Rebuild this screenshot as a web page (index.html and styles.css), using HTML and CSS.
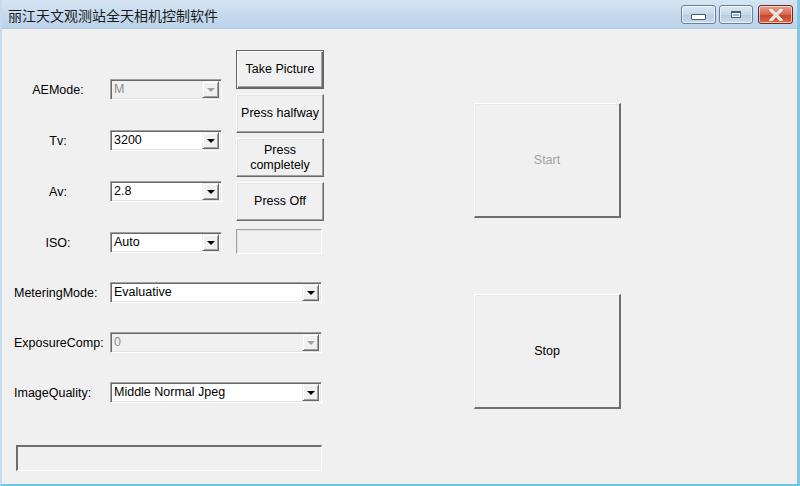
FILE: index.html
```html
<!DOCTYPE html>
<html lang="zh">
<head>
<meta charset="utf-8">
<title>丽江天文观测站全天相机控制软件</title>
<link rel="stylesheet" href="styles.css">
</head>
<body>
<div class="window">
  <div class="titlebar">
    <span class="title">丽江天文观测站全天相机控制软件</span>
    <div class="caption-btns">
      <span class="cap cap-min"><span class="min-glyph"></span></span>
      <span class="cap cap-max"><span class="max-glyph"></span></span>
      <span class="cap cap-close">
        <svg width="14" height="12" viewBox="0 0 14 12"><path d="M2 1 L12 11 M12 1 L2 11" stroke="#fff" stroke-width="3" stroke-linecap="square" fill="none"/><path d="M2 1 L12 11 M12 1 L2 11" stroke="#7a2a1a" stroke-width="0.6" fill="none" opacity="0.35"/></svg>
      </span>
    </div>
  </div>
  <div class="client">
    <div class="left">
      <div class="top">
        <div class="fields">
          <div class="row"><span class="lbl">AEMode:</span><div class="combo narrow disabled"><span class="val">M</span><span class="drop"><span class="tri"></span></span></div></div>
          <div class="row"><span class="lbl">Tv:</span><div class="combo narrow"><span class="val">3200</span><span class="drop"><span class="tri"></span></span></div></div>
          <div class="row"><span class="lbl">Av:</span><div class="combo narrow"><span class="val">2.8</span><span class="drop"><span class="tri"></span></span></div></div>
          <div class="row"><span class="lbl">ISO:</span><div class="combo narrow"><span class="val">Auto</span><span class="drop"><span class="tri"></span></span></div></div>
        </div>
        <div class="btncol">
          <div class="btn default">Take Picture</div>
          <div class="btn">Press halfway</div>
          <div class="btn">Press<br>completely</div>
          <div class="btn">Press Off</div>
          <div class="emptybox"></div>
        </div>
      </div>
      <div class="wide">
        <div class="wrow"><span class="wlbl">MeteringMode:</span><div class="combo wide-c"><span class="val">Evaluative</span><span class="drop"><span class="tri"></span></span></div></div>
        <div class="wrow"><span class="wlbl">ExposureComp:</span><div class="combo wide-c disabled"><span class="val">0</span><span class="drop"><span class="tri"></span></span></div></div>
        <div class="wrow"><span class="wlbl">ImageQuality:</span><div class="combo wide-c"><span class="val">Middle Normal Jpeg</span><span class="drop"><span class="tri"></span></span></div></div>
      </div>
      <div class="status"></div>
    </div>
    <div class="right">
      <div class="bigbtn disabled-text">Start</div>
      <div class="bigbtn">Stop</div>
    </div>
  </div>
</div>
</body>
</html>
```
FILE: styles.css
```css
html, body {
  margin: 0;
  padding: 0;
  background: #f0f0f0;
}
body {
  font-family: "Liberation Sans", Arial, sans-serif;
  font-size: 12.5px;
  color: #000;
}
.window {
  width: 800px;
  height: 486px;
  box-sizing: border-box;
  background: #f0f0f0;
  border-left: 2px solid #c8dbee;
  border-right: 3px solid #7cc8ea;
  border-bottom: 2px solid #6cc6e6;
  overflow: hidden;
}
.titlebar {
  height: 29px;
  box-sizing: border-box;
  background: linear-gradient(#d6e5f4, #c4d8ed 60%, #bcd3ea);
  border-bottom: 1px solid #b4cae2;
  display: flex;
  align-items: center;
  justify-content: space-between;
  padding-left: 6px;
  padding-right: 4px;
}
.title {
  font-family: "Noto Sans CJK SC", sans-serif;
  font-size: 14px;
  color: #1a1a1a;
  margin-top: 2px;
}
.caption-btns {
  display: flex;
  gap: 3px;
  align-self: flex-start;
  margin-top: 5px;
}
.cap {
  height: 19px;
  box-sizing: border-box;
  border: 1px solid #6a7f99;
  border-radius: 3px;
  display: flex;
  align-items: center;
  justify-content: center;
  box-shadow: inset 0 0 0 1px rgba(255,255,255,0.6);
}
.cap-min, .cap-max {
  width: 35px;
  background: linear-gradient(#dde9f5, #c5d7ea 50%, #b6cce3 51%, #c8daee);
}
.cap-min { margin-left: 2px; }
.cap-max { width: 34px; margin-right: 2px; }
.cap-close {
  width: 35px;
  border-color: #6b2a1f;
  background: linear-gradient(#e9a08e, #d4674d 50%, #c24429 51%, #d66a4c);
}
.min-glyph {
  width: 13px;
  height: 4px;
  margin-top: 5px;
  background: #fff;
  border: 1px solid #4a5a70;
  border-radius: 1px;
}
.max-glyph {
  width: 10px;
  height: 7px;
  box-sizing: border-box;
  border: 1px solid #4a5a70;
  border-top-width: 2px;
  background: #fff;
  box-shadow: inset 0 0 0 1px #fff, inset 0 0 0 3px #9fb3c9;
}
.client {
  display: flex;
  height: 455px;
}
.left {
  width: 322px;
  display: flex;
  flex-direction: column;
}
.top {
  display: flex;
  padding-top: 21px;
}
.fields {
  display: flex;
  flex-direction: column;
  gap: 30px;
  padding-top: 29px;
  width: 234px;
  flex: none;
}
.row {
  display: flex;
  align-items: center;
  height: 21px;
}
.lbl {
  width: 80px;
  margin-left: 16px;
  text-align: center;
  margin-right: 12px;
}
.combo {
  height: 21px;
  box-sizing: border-box;
  background: #fff;
  border-top: 1px solid #a0a0a0;
  border-left: 1px solid #a0a0a0;
  border-right: 1px solid #fff;
  border-bottom: 1px solid #fff;
  box-shadow: inset 1px 1px 0 #696969, inset -1px -1px 0 #e3e3e3;
  display: flex;
  align-items: center;
  justify-content: space-between;
  padding: 2px 2px 2px 3px;
  flex: none;
}
.combo.narrow { width: 112px; }
.combo.wide-c { width: 212px; }
.combo .val {
  line-height: 15px;
}
.combo.disabled { background: #f0f0f0; }
.combo.disabled .val { color: #8c8c8c; }
.drop {
  width: 17px;
  height: 17px;
  box-sizing: border-box;
  background: #f0f0f0;
  border-top: 1px solid #f0f0f0;
  border-left: 1px solid #f0f0f0;
  border-right: 1px solid #696969;
  border-bottom: 1px solid #696969;
  box-shadow: inset 1px 1px 0 #fff, inset -1px -1px 0 #a0a0a0;
  display: flex;
  align-items: center;
  justify-content: center;
}
.tri {
  width: 0;
  height: 0;
  border-left: 4px solid transparent;
  border-right: 4px solid transparent;
  border-top: 4px solid #000;
  margin-top: 1px;
}
.combo.disabled .tri { border-top-color: #a0a0a0; }
.btncol {
  display: flex;
  flex-direction: column;
  gap: 5px;
  width: 88px;
  flex: none;
}
.btn {
  height: 39px;
  box-sizing: border-box;
  background: #f0f0f0;
  border-top: 1px solid #fff;
  border-left: 1px solid #fff;
  border-right: 1px solid #696969;
  border-bottom: 1px solid #696969;
  box-shadow: inset -1px -1px 0 #a0a0a0, inset 1px 1px 0 #e3e3e3;
  display: flex;
  align-items: center;
  justify-content: center;
  text-align: center;
  line-height: 15px;
}
.btn.default {
  border: 1px solid #646464;
  box-shadow: inset 1px 1px 0 #fff, inset -1px -1px 0 #696969, inset -2px -2px 0 #a0a0a0;
}
.emptybox {
  margin-top: 3px;
  width: 86px;
  height: 25px;
  box-sizing: border-box;
  background: #f0f0f0;
  border-top: 1px solid #a0a0a0;
  border-left: 1px solid #a0a0a0;
  border-right: 1px solid #fff;
  border-bottom: 1px solid #fff;
  box-shadow: inset 1px 1px 0 #e3e3e3;
}
.wide {
  display: flex;
  flex-direction: column;
  gap: 29px;
  padding-top: 28px;
}
.wrow {
  display: flex;
  align-items: center;
  height: 21px;
}
.wlbl {
  width: 96px;
  margin-left: 12px;
  flex: none;
}
.status {
  margin-top: 42px;
  margin-left: 14px;
  width: 306px;
  height: 26px;
  box-sizing: border-box;
  background: #f0f0f0;
  border-top: 2px solid #6e6e6e;
  border-left: 2px solid #6e6e6e;
  border-right: 1px solid #fff;
  border-bottom: 1px solid #fff;
}
.right {
  margin-left: 150px;
  display: flex;
  flex-direction: column;
  gap: 76px;
  padding-top: 74px;
}
.bigbtn {
  width: 147px;
  height: 115px;
  box-sizing: border-box;
  background: #f0f0f0;
  border-top: 1px solid #fff;
  border-left: 1px solid #fff;
  border-right: 2px solid #6e6e6e;
  border-bottom: 2px solid #6e6e6e;
  box-shadow: inset 1px 1px 0 #e8e8e8;
  display: flex;
  align-items: center;
  justify-content: center;
}
.bigbtn.disabled-text { color: #a0a0a0; }
```
